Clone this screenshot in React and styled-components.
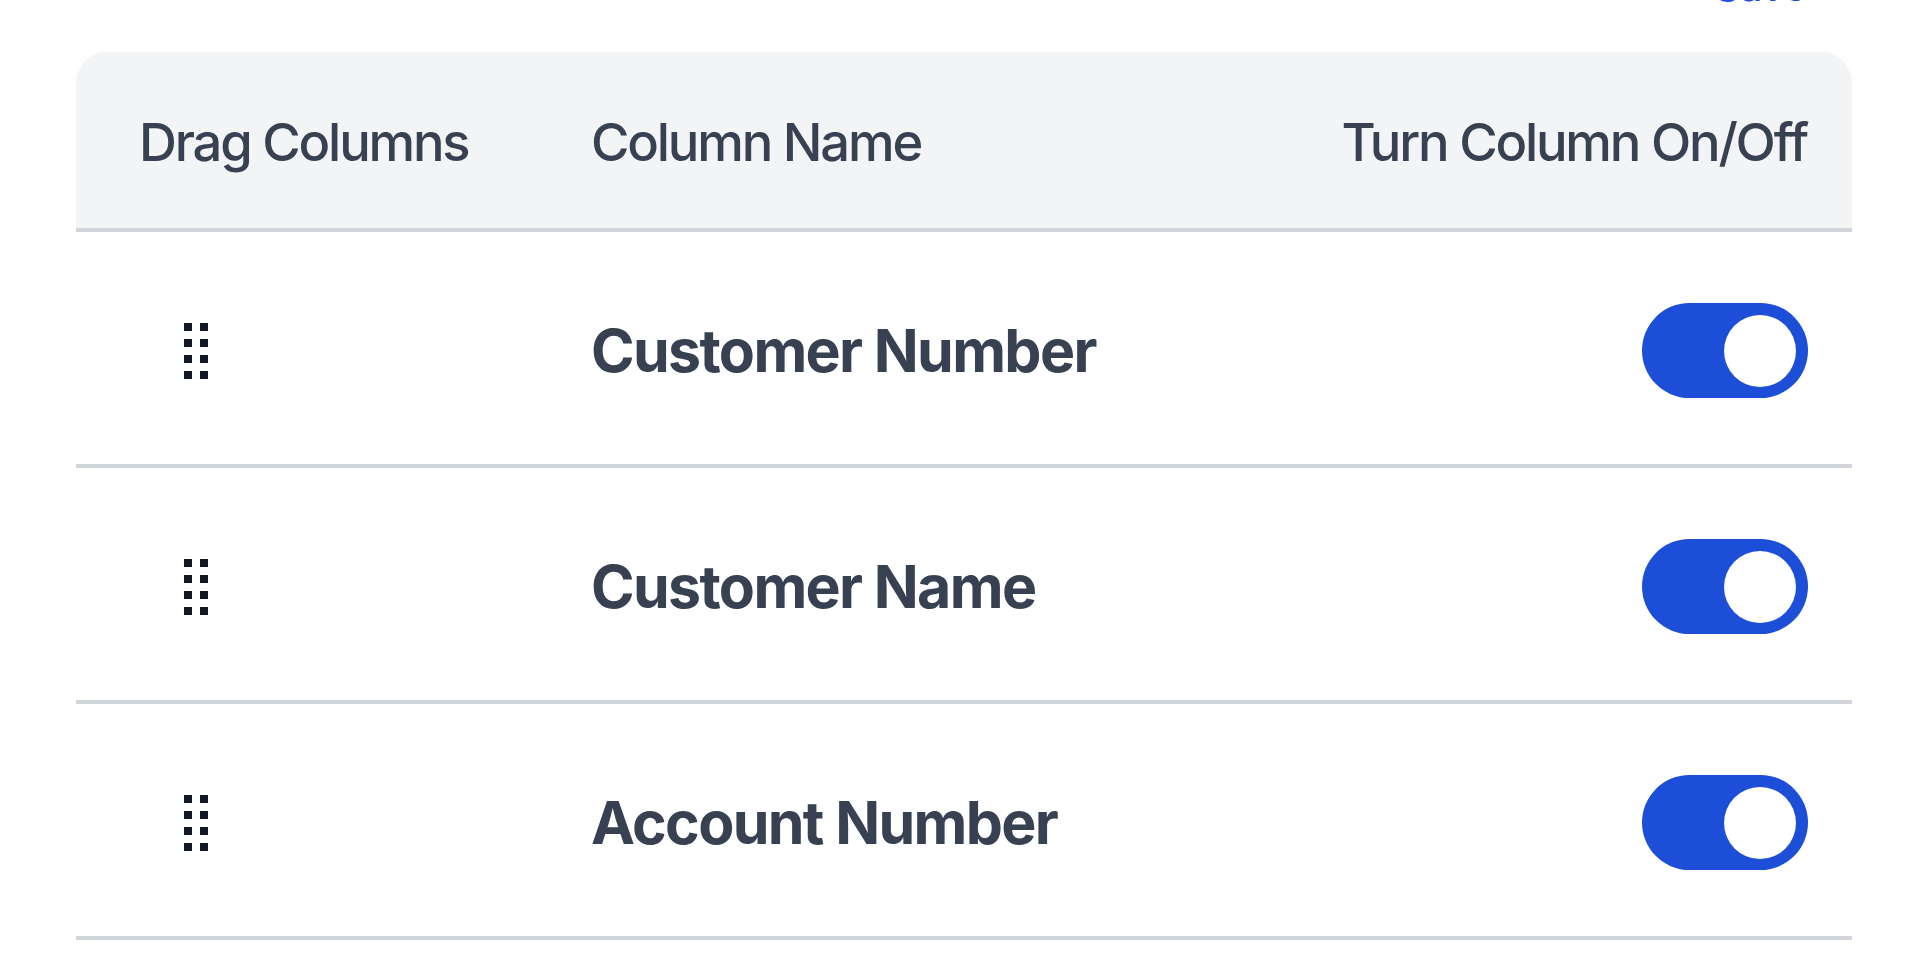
import React, { useState } from 'react'
import styled, { createGlobalStyle } from 'styled-components'

const GlobalStyle = createGlobalStyle`
  html, body {
    margin: 0;
    padding: 0;
    background: #ffffff;
    font-family: Inter, "Noto Sans", "Liberation Sans", sans-serif;
    overflow: hidden;
  }
`

const Page = styled.div`
  width: 1920px;
  height: 980px;
  padding: 0 68px 0 76px;
  box-sizing: border-box;
  overflow: hidden;
`

const TopBar = styled.div`
  height: 52px;
  display: flex;
  justify-content: flex-end;
  align-items: flex-start;
  padding-right: 46px;
`

const TopLink = styled.a`
  margin-top: -38px;
  font-size: 40px;
  line-height: 50px;
  font-weight: 500;
  letter-spacing: -0.5px;
  color: #1d4ed8;
  text-decoration: none;
`

const Table = styled.div`
  border-radius: 30px 30px 0 0;
  overflow: hidden;
`

const HeadRow = styled.div`
  display: grid;
  grid-template-columns: 515px 1fr auto;
  align-items: center;
  height: 173px;
  padding-top: 3px;
  background: #f3f4f6;
  border-bottom: 4px solid #d1d5db;
`

const HeadCell = styled.div`
  font-size: 52.5px;
  font-weight: 500;
  letter-spacing: -2.2px;
  color: #374151;
  padding-left: ${p => p.$padLeft || 0}px;
  padding-right: ${p => p.$padRight || 0}px;
  white-space: nowrap;
`

const Row = styled.div`
  display: grid;
  grid-template-columns: 515px 1fr auto;
  align-items: center;
  height: 227px;
  padding-top: 5px;
  border-bottom: 4px solid #d1d5db;
`

const HandleCell = styled.div`
  padding-left: 108px;
  display: flex;
  align-items: center;
  cursor: grab;
`

const NameCell = styled.div`
  font-size: 59px;
  font-weight: 700;
  letter-spacing: -1.65px;
  color: #374151;
  white-space: nowrap;
`

const ToggleCell = styled.div`
  padding-right: 44px;
  display: flex;
  justify-content: flex-end;
`

const Toggle = styled.button`
  position: relative;
  width: 166px;
  height: 95px;
  border: none;
  padding: 0;
  border-radius: 48px;
  background: ${p => (p.$on ? '#1d4ed8' : '#d1d5db')};
  cursor: pointer;
`

const Knob = styled.span`
  position: absolute;
  top: 12px;
  left: ${p => (p.$on ? '82px' : '12px')};
  width: 72px;
  height: 72px;
  border-radius: 50%;
  background: #ffffff;
`

const DragHandle = () => (
  <svg width="24" height="56" viewBox="0 0 24 56">
    {[0, 16, 32, 48].map(y => (
      <g key={y} fill="#111827">
        <rect x="0" y={y} width="8" height="8" />
        <rect x="16" y={y} width="8" height="8" />
      </g>
    ))}
  </svg>
)

const initial = [
  { name: 'Customer Number', on: true },
  { name: 'Customer Name', on: true },
  { name: 'Account Number', on: true },
]

export default function App() {
  const [cols, setCols] = useState(initial)

  const flip = i =>
    setCols(cols.map((c, j) => (j === i ? { ...c, on: !c.on } : c)))

  return (
    <>
      <GlobalStyle />
      <Page>
        <TopBar>
          <TopLink href="#">Save</TopLink>
        </TopBar>
        <Table>
          <HeadRow>
            <HeadCell $padLeft={63}>Drag Columns</HeadCell>
            <HeadCell>Column Name</HeadCell>
            <HeadCell $padRight={45}>Turn Column On/Off</HeadCell>
          </HeadRow>
          {cols.map((c, i) => (
            <Row key={c.name}>
              <HandleCell>
                <DragHandle />
              </HandleCell>
              <NameCell>{c.name}</NameCell>
              <ToggleCell>
                <Toggle $on={c.on} onClick={() => flip(i)}>
                  <Knob $on={c.on} />
                </Toggle>
              </ToggleCell>
            </Row>
          ))}
        </Table>
      </Page>
    </>
  )
}
